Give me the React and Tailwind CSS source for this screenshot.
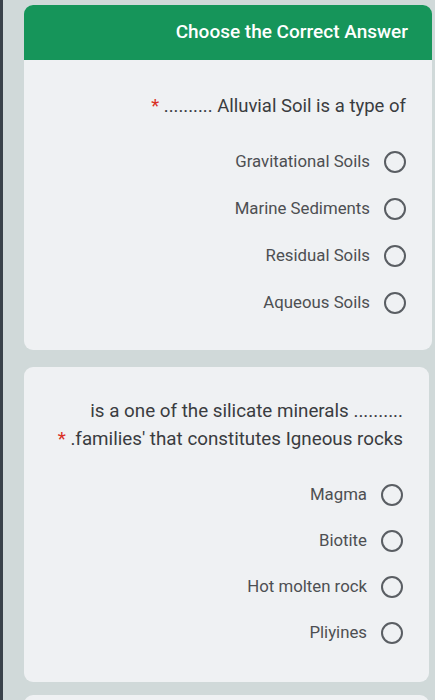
const font = { fontFamily: 'Roboto, "Noto Sans", sans-serif' };

function Option({ label, h }) {
  return (
    <div className={`flex items-center justify-end gap-[14px] ${h}`}>
      <span className="text-[16.8px] text-[#4d4f52]">{label}</span>
      <span className="w-[22px] h-[22px] rounded-full border-2 border-[#5a5e63]" />
    </div>
  );
}

export default function App() {
  return (
    <div
      className="w-[435px] h-[700px] overflow-hidden bg-[#d0d9d9] border-l-[3px] border-[#39424a] pl-[21px] pr-[3px] pt-[5px]"
      style={font}
    >
      <div className="rounded-[9px] bg-[#eff1f3] overflow-hidden">
        <div className="h-[55px] bg-[#16955a] flex items-center justify-end pr-[24px]">
          <span className="text-white text-[19px] font-medium">Choose the Correct Answer</span>
        </div>
        <div className="pt-[34px] pb-[24px] pr-[26px]">
          <p className="text-right text-[18.5px] leading-[24px] text-[#3a3c3f]">
            <span className="text-[#d93025]">*</span> .......... Alluvial Soil is a type of
          </p>
          <div className="mt-[20px] flex flex-col">
            <Option label="Gravitational Soils" h="h-[47px]" />
            <Option label="Marine Sediments" h="h-[47px]" />
            <Option label="Residual Soils" h="h-[47px]" />
            <Option label="Aqueous Soils" h="h-[47px]" />
          </div>
        </div>
      </div>

      <div className="mt-[17px] mr-[3px] rounded-[9px] bg-[#eff1f3] pt-[30px] pb-[26px] pr-[26px]">
        <p className="text-right text-[18.8px] leading-[28px] text-[#3a3c3f]">
          is a one of the silicate minerals ..........
          <br />
          <span className="text-[#d93025]">*</span> .families' that constitutes Igneous rocks
        </p>
        <div className="mt-[19px] flex flex-col">
          <Option label="Magma" h="h-[46px]" />
          <Option label="Biotite" h="h-[46px]" />
          <Option label="Hot molten rock" h="h-[46px]" />
          <Option label="Pliyines" h="h-[46px]" />
        </div>
      </div>

      <div className="mt-[13px] mr-[3px] h-[40px] rounded-t-[9px] bg-[#eff1f3]" />
    </div>
  );
}
